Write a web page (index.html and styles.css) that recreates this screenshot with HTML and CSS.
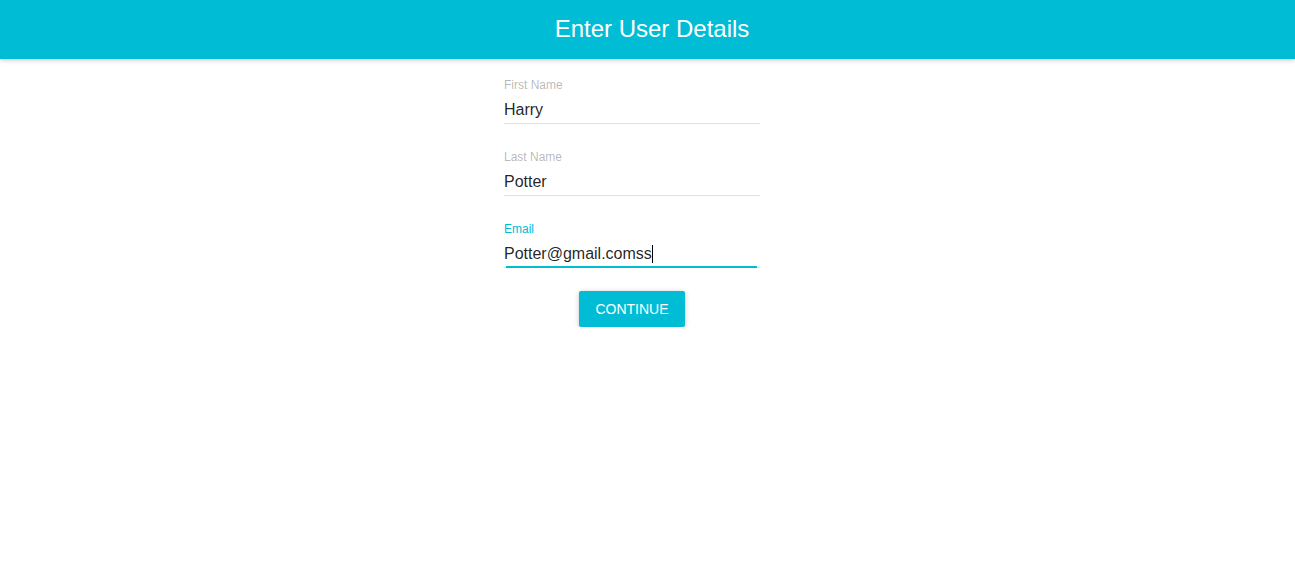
FILE: index.html
```html
<!DOCTYPE html>
<html>
<head>
<meta charset="utf-8">
<title>Enter User Details</title>
<link rel="stylesheet" href="styles.css">
</head>
<body>
  <header class="app-bar">
    <h1 class="app-title">Enter User Details</h1>
  </header>
  <main class="content">
    <form class="form">
      <div class="field">
        <label class="field-label">First Name</label>
        <div class="field-input">Harry</div>
        <div class="underline"></div>
      </div>
      <div class="field">
        <label class="field-label">Last Name</label>
        <div class="field-input">Potter</div>
        <div class="underline"></div>
      </div>
      <div class="field field-focused">
        <label class="field-label">Email</label>
        <div class="field-input">Potter@gmail.comss<span class="caret"></span></div>
        <div class="underline"><div class="underline-focus"></div></div>
      </div>
      <div class="actions">
        <button type="button" class="btn">CONTINUE</button>
      </div>
    </form>
  </main>
</body>
</html>
```
FILE: styles.css
```css
* { box-sizing: border-box; }
html, body { margin: 0; padding: 0; background: #fff; }
body {
  font-family: "Liberation Sans", Arial, sans-serif;
  color: rgba(0,0,0,0.87);
}
.app-bar {
  height: 59px;
  background: #00bcd4;
  box-shadow: 0 1px 6px rgba(0,0,0,0.12), 0 1px 4px rgba(0,0,0,0.12);
  display: flex;
  align-items: center;
  justify-content: center;
  padding-left: 9px;
  padding-bottom: 2px;
  position: relative;
  z-index: 1;
}
.app-title {
  margin: 0;
  font-size: 24px;
  font-weight: 400;
  color: #fff;
  line-height: 30px;
}
.content {
  display: flex;
  padding-left: 504px;
}
.form {
  width: 256px;
  display: flex;
  flex-direction: column;
}
.field {
  height: 72px;
  padding-top: 19px;
  display: flex;
  flex-direction: column;
}
.field-label {
  font-size: 12px;
  line-height: 14px;
  height: 14px;
  color: rgba(0,0,0,0.3);
}
.field-focused .field-label { color: #00bcd4; }
.field-input {
  margin-top: 6px;
  height: 24px;
  font-size: 16px;
  line-height: 24px;
  color: rgba(0,0,0,0.87);
  display: flex;
  align-items: center;
}
.caret {
  display: inline-block;
  width: 1px;
  height: 18px;
  background: #000;
}
.underline {
  margin-top: 1px;
  height: 1px;
  background: #e0e0e0;
  position: relative;
}
.underline-focus {
  position: absolute;
  left: 2px;
  right: 3px;
  top: -1px;
  height: 2px;
  background: #00bcd4;
}
.actions {
  display: flex;
  justify-content: center;
  padding-top: 16px;
}
.btn {
  width: 106px;
  height: 36px;
  border: none;
  border-radius: 2px;
  background: #00bcd4;
  color: #fff;
  font-family: "Liberation Sans", Arial, sans-serif;
  font-size: 14px;
  padding: 0;
  box-shadow: 0 1px 6px rgba(0,0,0,0.12), 0 1px 4px rgba(0,0,0,0.12);
  cursor: pointer;
}
```
